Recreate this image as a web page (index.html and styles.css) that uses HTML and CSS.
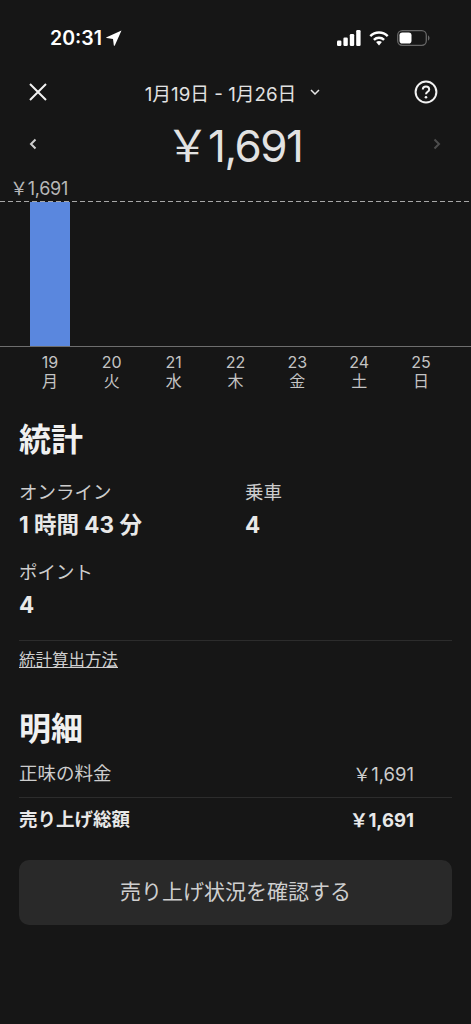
FILE: index.html
```html
<!DOCTYPE html>
<html lang="ja">
<head>
  <meta charset="UTF-8">
  <meta name="viewport" content="width=device-width, initial-scale=1.0">
  <title>売り上げ</title>
  <link rel="stylesheet" href="styles.css">
</head>
<body>
  <div class="status-bar">
    <div class="status-time">
      <span>20:31</span>
      <svg class="location-icon" viewBox="0 0 16 16"><path d="M15.500 .6 L8.800 15.400 C8.500 16 7.900 15.900 7.800 15.200 L7 9 L.8 8.100 C.1 8 0 7.400 .6 7.200 Z" fill="#fff"/></svg>
    </div>
    <div class="status-icons">
      <svg class="signal-icon" viewBox="0 0 24 16"><rect x="0" y="10.500" width="4.400" height="5.500" rx="1.200"/><rect x="6.400" y="7.500" width="4.400" height="8.500" rx="1.200"/><rect x="12.800" y="4" width="4.400" height="12" rx="1.200"/><rect x="19.200" y="0" width="4.400" height="16" rx="1.200"/></svg>
      <svg class="wifi-icon" viewBox="0 0 20 15"><path d="M1.300 5.100 A12.500 12.500 0 0 1 18.700 5.100" fill="none" stroke="#fff" stroke-width="2.500"/><path d="M4.900 8.800 A7.400 7.400 0 0 1 15.100 8.800" fill="none" stroke="#fff" stroke-width="2.500"/><path d="M10 9.900c-1.100 0-2.100.4-2.900 1.100L10 14.500l2.900-3.500c-.8-.7-1.800-1.100-2.900-1.100z"/></svg>
      <svg class="battery-icon" viewBox="0 0 33 16"><rect x=".7" y=".7" width="28.600" height="14.600" rx="4.500" fill="none" stroke="#666" stroke-width="1.300"/><rect x="2.500" y="2.500" width="12" height="11" rx="2.800" fill="#fff"/><path d="M31 5.500c1 .3 1.500 1.300 1.500 2.500s-.5 2.200-1.500 2.500z" fill="#666"/></svg>
    </div>
  </div>

  <header class="top-nav">
    <svg class="close-icon" viewBox="0 0 18 18"><path d="M1 1 L17 17 M17 1 L1 17" stroke="#f2f2f2" stroke-width="2" fill="none"/></svg>
    <div class="date-range">
      <span>1月19日 - 1月26日</span>
      <svg class="chevron-down" viewBox="0 0 10 6"><path d="M1 1 L5 5 L9 1" stroke="#e6e6e6" stroke-width="1.500" fill="none"/></svg>
    </div>
    <svg class="help-icon" viewBox="0 0 24 24"><circle cx="12" cy="12" r="10.400" stroke="#f2f2f2" stroke-width="2" fill="none"/><path d="M8.800 9.500c0-1.800 1.400-3 3.200-3s3.200 1.200 3.200 2.900c0 2.400-3.200 2.400-3.200 4.900" stroke="#f2f2f2" stroke-width="2" fill="none"/><circle cx="12" cy="17.300" r="1.300" fill="#f2f2f2"/></svg>
  </header>

  <div class="amount-row">
    <svg class="arrow" viewBox="0 0 8 12"><path d="M6.500 1.500 L2 6 L6.500 10.500" stroke="#cfcfcf" stroke-width="2" fill="none"/></svg>
    <div class="amount"><span class="yen">￥</span>1,691</div>
    <svg class="arrow" viewBox="0 0 8 12"><path d="M1.500 1.500 L6 6 L1.500 10.500" stroke="#4d4d4d" stroke-width="2" fill="none"/></svg>
  </div>

  <section class="chart">
    <div class="chart-max"><span class="yen">￥</span>1,691</div>
    <div class="plot">
      <div class="plot-col"><div class="bar"></div></div>
    </div>
    <div class="days">
      <div class="day"><span>19</span><span>月</span></div>
      <div class="day"><span>20</span><span>火</span></div>
      <div class="day"><span>21</span><span>水</span></div>
      <div class="day"><span>22</span><span>木</span></div>
      <div class="day"><span>23</span><span>金</span></div>
      <div class="day"><span>24</span><span>土</span></div>
      <div class="day"><span>25</span><span>日</span></div>
    </div>
  </section>

  <section class="stats">
    <h2>統計</h2>
    <div class="stat-grid">
      <div class="stat">
        <div class="stat-label">オンライン</div>
        <div class="stat-value">1 時間 43 分</div>
      </div>
      <div class="stat">
        <div class="stat-label">乗車</div>
        <div class="stat-value">4</div>
      </div>
      <div class="stat">
        <div class="stat-label">ポイント</div>
        <div class="stat-value">4</div>
      </div>
    </div>
    <a class="stats-link" href="#">統計算出方法</a>
  </section>

  <section class="details">
    <h2>明細</h2>
    <div class="line">
      <span>正味の料金</span>
      <span class="line-amount"><span class="yen">￥</span>1,691</span>
    </div>
    <div class="line total">
      <span>売り上げ総額</span>
      <span class="line-amount"><span class="yen">￥</span>1,691</span>
    </div>
    <button class="btn">売り上げ状況を確認する</button>
  </section>
</body>
</html>
```

FILE: styles.css
```css
* {
  box-sizing: border-box;
}

body {
  margin: 0;
  height: 1024px;
  overflow: hidden;
  background-color: #161616;
  color: #e2e2e2;
  font-family: Inter, "Noto Sans CJK JP", sans-serif;
}

h2 {
  margin: 0;
  font-size: 32px;
  line-height: 40px;
  font-weight: 700;
  color: #f0f0f0;
}

.yen {
  font-family: "Noto Sans CJK JP", sans-serif;
}

.status-bar {
  height: 76px;
  padding: 0 41px 0 50px;
  display: flex;
  justify-content: space-between;
  align-items: flex-start;
  color: #fff;
}

.status-time {
  margin-top: 26px;
  display: flex;
  align-items: center;
  gap: 4px;
  font-size: 19.500px;
  line-height: 24px;
  font-weight: 600;
}

.location-icon {
  width: 16px;
  height: 16px;
}

.status-icons {
  margin-top: 30px;
  display: flex;
  align-items: center;
  gap: 8px;
}

.signal-icon {
  width: 24px;
  height: 16px;
  fill: #fff;
}

.wifi-icon {
  width: 20px;
  height: 15px;
  fill: #fff;
}

.battery-icon {
  width: 33px;
  height: 16px;
}

.top-nav {
  height: 32px;
  padding: 0 33px 0 29px;
  display: flex;
  justify-content: space-between;
  align-items: center;
}

.close-icon {
  width: 18px;
  height: 18px;
}

.help-icon {
  width: 24px;
  height: 24px;
}

.date-range {
  margin-left: 4px;
  display: flex;
  align-items: center;
  gap: 14px;
  font-size: 18.750px;
  color: #e2e2e2;
}

.chevron-down {
  width: 10px;
  height: 6px;
}

.amount-row {
  height: 56px;
  margin-top: 8px;
  padding: 0 30px 0 29px;
  display: flex;
  justify-content: space-between;
  align-items: center;
}

.arrow {
  width: 8px;
  height: 12px;
}

.amount {
  margin-right: 2px;
  font-size: 44px;
  line-height: 56px;
  letter-spacing: -1.500px;
  color: #e2e2e2;
}

.chart-max {
  margin: 5px 0 0 10px;
  height: 24px;
  font-size: 18px;
  line-height: 20px;
  letter-spacing: -0.300px;
  color: #b8b8b8;
}

.plot {
  height: 146px;
  padding: 1px 19px 0;
  background-image: linear-gradient(to right, #a8a8a8 5px, transparent 5px);
  background-size: 8px 1px;
  background-repeat: repeat-x;
  border-bottom: 1px solid #6e6e6e;
  display: grid;
  grid-template-columns: repeat(7, 1fr);
}

.plot-col {
  display: flex;
  justify-content: center;
}

.bar {
  width: 40px;
  background-color: #5a87de;
}

.days {
  padding: 6px 19px 0;
  display: grid;
  grid-template-columns: repeat(7, 1fr);
}

.day {
  display: flex;
  flex-direction: column;
  align-items: center;
  font-size: 16px;
  line-height: 19px;
  color: #c4c4c4;
}

.stats {
  margin-top: 29px;
  padding: 0 19px;
}

.stat-grid {
  margin-top: 19px;
  display: grid;
  grid-template-columns: 226px 1fr;
  row-gap: 19px;
}

.stat-label {
  font-size: 18.500px;
  line-height: 26px;
  color: #cdcdcd;
}

.stat-value {
  margin-top: 5px;
  font-size: 22.500px;
  line-height: 30px;
  font-weight: 700;
  color: #e8e8e8;
}

.stats-link {
  display: block;
  margin-top: 20px;
  padding-top: 7px;
  border-top: 1px solid #2c2c2c;
  font-size: 16.500px;
  line-height: 24px;
  color: #d0d0d0;
}

.details {
  margin-top: 37px;
  padding: 0 19px;
}

.details h2 {
  margin-bottom: 11px;
}

.line {
  display: flex;
  justify-content: space-between;
  padding: 0 38px 0 0;
  font-size: 18.500px;
  line-height: 26px;
  color: #cdcdcd;
}

.line.total {
  margin-top: 10px;
  padding-top: 8px;
  border-top: 1px solid #2c2c2c;
  font-weight: 700;
  color: #e8e8e8;
}

.btn {
  display: block;
  width: 100%;
  height: 65px;
  margin-top: 27px;
  padding: 0 0 6px;
  border: none;
  border-radius: 10px;
  background-color: #292929;
  font-family: inherit;
  font-size: 21px;
  color: #cfcfcf;
}
```
